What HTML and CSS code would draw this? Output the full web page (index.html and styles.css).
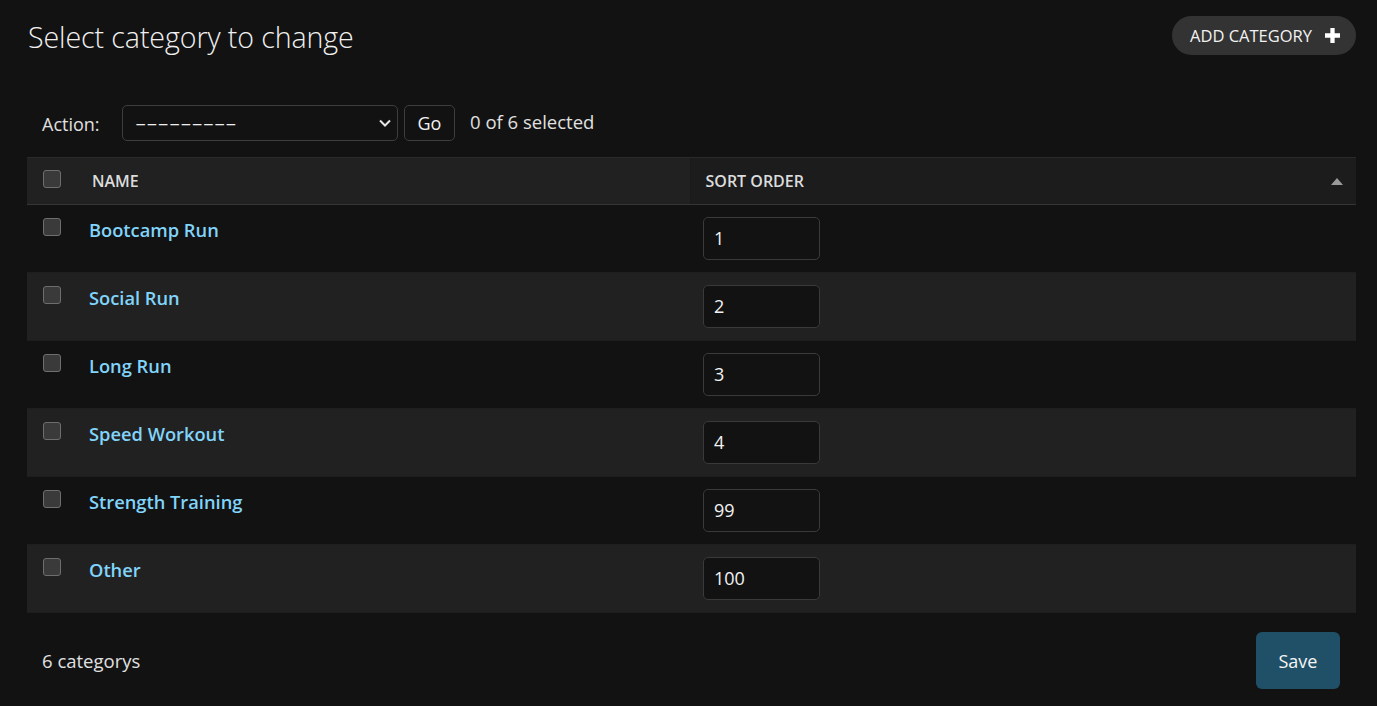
FILE: index.html
```html
<!DOCTYPE html>
<html lang="en">
<head>
<meta charset="utf-8">
<title>Select category to change</title>
<link rel="stylesheet" href="styles.css">
</head>
<body>
<div class="content">
  <div class="top">
    <h1 class="title">Select category to change</h1>
    <a class="addlink" href="#">ADD CATEGORY
      <svg class="plus" width="15" height="15" viewBox="0 0 14 14"><path d="M5 0h4v5h5v4H9v5H5V9H0V5h5z" fill="#fff"/></svg>
    </a>
  </div>
  <div class="actions">
    <label class="action-label">Action:</label>
    <div class="select">
      <span class="dashes">---------</span>
      <svg width="14" height="10" viewBox="0 0 14 10"><path d="M2 2.5l5 5 5-5" stroke="#e6e6e6" stroke-width="2" fill="none"/></svg>
    </div>
    <button class="go">Go</button>
    <span class="counter">0 of 6 selected</span>
  </div>
  <table class="results">
    <thead>
      <tr>
        <th class="col-check"><span class="cb"></span></th>
        <th class="col-name">NAME</th>
        <th class="col-sort"><div class="sort-wrap"><span>SORT ORDER</span><span class="tri"></span></div></th>
      </tr>
    </thead>
    <tbody>
      <tr><td class="col-check"><span class="cb"></span></td><td class="name"><a href="#">Bootcamp Run</a></td><td class="sort"><div class="inp">1</div></td></tr>
      <tr class="alt"><td class="col-check"><span class="cb"></span></td><td class="name"><a href="#">Social Run</a></td><td class="sort"><div class="inp">2</div></td></tr>
      <tr><td class="col-check"><span class="cb"></span></td><td class="name"><a href="#">Long Run</a></td><td class="sort"><div class="inp">3</div></td></tr>
      <tr class="alt"><td class="col-check"><span class="cb"></span></td><td class="name"><a href="#">Speed Workout</a></td><td class="sort"><div class="inp">4</div></td></tr>
      <tr><td class="col-check"><span class="cb"></span></td><td class="name"><a href="#">Strength Training</a></td><td class="sort"><div class="inp">99</div></td></tr>
      <tr class="alt"><td class="col-check"><span class="cb"></span></td><td class="name"><a href="#">Other</a></td><td class="sort"><div class="inp">100</div></td></tr>
    </tbody>
  </table>
  <div class="footer">
    <span class="count">6 categorys</span>
    <button class="save">Save</button>
  </div>
</div>
</body>
</html>
```
FILE: styles.css
```css
* { box-sizing: border-box; }
html, body { margin: 0; padding: 0; background: #121212; }
body {
  font-family: "Open Sans", "Noto Sans", sans-serif;
  color: #e8e8e8;
  font-size: 18px;
}
.content { padding: 0 21px 0 27px; }
.top {
  display: flex;
  justify-content: space-between;
  align-items: flex-start;
  height: 105px;
}
.title {
  margin: 15px 0 0 1px;
  font-size: 28.6px;
  font-weight: 300;
  color: #f0f0f0;
  line-height: 44px;
  letter-spacing: -0.1px;
}
.addlink {
  margin-top: 16px;
  height: 39px;
  width: 184px;
  border-radius: 20px;
  background: #333333;
  color: #f2f2f2;
  text-decoration: none;
  font-size: 16.5px;
  display: flex;
  align-items: center;
  justify-content: center;
  gap: 13px;
  padding-left: 2px;
}
.plus { margin-top: -1px; }
.actions {
  display: flex;
  align-items: center;
  height: 36px;
  padding-left: 15px;
  margin-bottom: 16px;
}
.action-label { font-size: 18px; color: #e0e0e0; width: 80px; margin-top: 2px; }
.select {
  width: 276px;
  height: 36px;
  border: 1px solid #3d3d3d;
  border-radius: 5px;
  display: flex;
  align-items: center;
  justify-content: space-between;
  padding: 0 5px 0 12px;
  color: #eee;
  font-size: 18px;
}
.dashes { display: inline-block; transform: scaleX(1.95); transform-origin: left center; }
.go {
  margin-left: 6px;
  width: 51px;
  height: 36px;
  border: 1px solid #3d3d3d;
  border-radius: 5px;
  background: #121212;
  color: #f0f0f0;
  font-family: inherit;
  font-size: 18px;
  padding: 0;
}
.counter { margin-left: 15px; font-size: 18.5px; color: #e0e0e0; margin-top: -4px; }
.results {
  width: 100%;
  border-collapse: collapse;
  table-layout: fixed;
}
.results thead th {
  height: 47px;
  border-top: 1px solid #2a2a2a;
  border-bottom: 1px solid #353535;
  background: #212121;
  text-align: left;
  font-size: 16px;
  font-weight: 600;
  color: #dcdcdc;
  vertical-align: middle;
  padding: 0;
}
.results th.col-check, .results td.col-check { width: 48px; }
.results th.col-name { width: 615px; padding-left: 17px; }
.results th.col-sort { background: #1c1c1c; border-left: 1px solid #1a1a1a; padding: 0 13px 0 15px; }
.sort-wrap { display: flex; justify-content: space-between; align-items: center; }
.tri {
  width: 0; height: 0;
  border-left: 6px solid transparent;
  border-right: 6px solid transparent;
  border-bottom: 7px solid #9a9a9a;
}
.results thead .cb { margin-top: -4px; }
.cb {
  display: block;
  width: 18px;
  height: 18px;
  margin-left: 16px;
  border: 1px solid #6e6e6e;
  border-radius: 3px;
  background: #3a3a3a;
}
.results tbody tr { height: 68px; }
.results tbody tr.alt { background: #212121; }
.results tbody td {
  vertical-align: top;
  border-bottom: 1px solid #1e1e1e;
  padding: 0;
}
.results tbody td.col-check { padding-top: 13px; }
.results td.name { padding: 12px 0 0 14px; font-size: 18.3px; font-weight: 600; }
.results td.name a { color: #81d4fa; text-decoration: none; }
.results td.sort { padding: 12px 0 0 13px; }
.inp {
  width: 117px;
  height: 43px;
  border: 1px solid #3a3a3a;
  border-radius: 5px;
  background: #121212;
  color: #f2f2f2;
  font-size: 18px;
  padding: 8px 0 0 10px;
}
.footer {
  display: flex;
  justify-content: space-between;
  align-items: center;
  padding: 19px 16px 0 15px;
}
.count { font-size: 18.5px; color: #e0e0e0; }
.save {
  width: 84px;
  height: 57px;
  border: none;
  border-radius: 6px;
  background: #205067;
  color: #f5f5f5;
  font-family: inherit;
  font-size: 18px;
}
```
